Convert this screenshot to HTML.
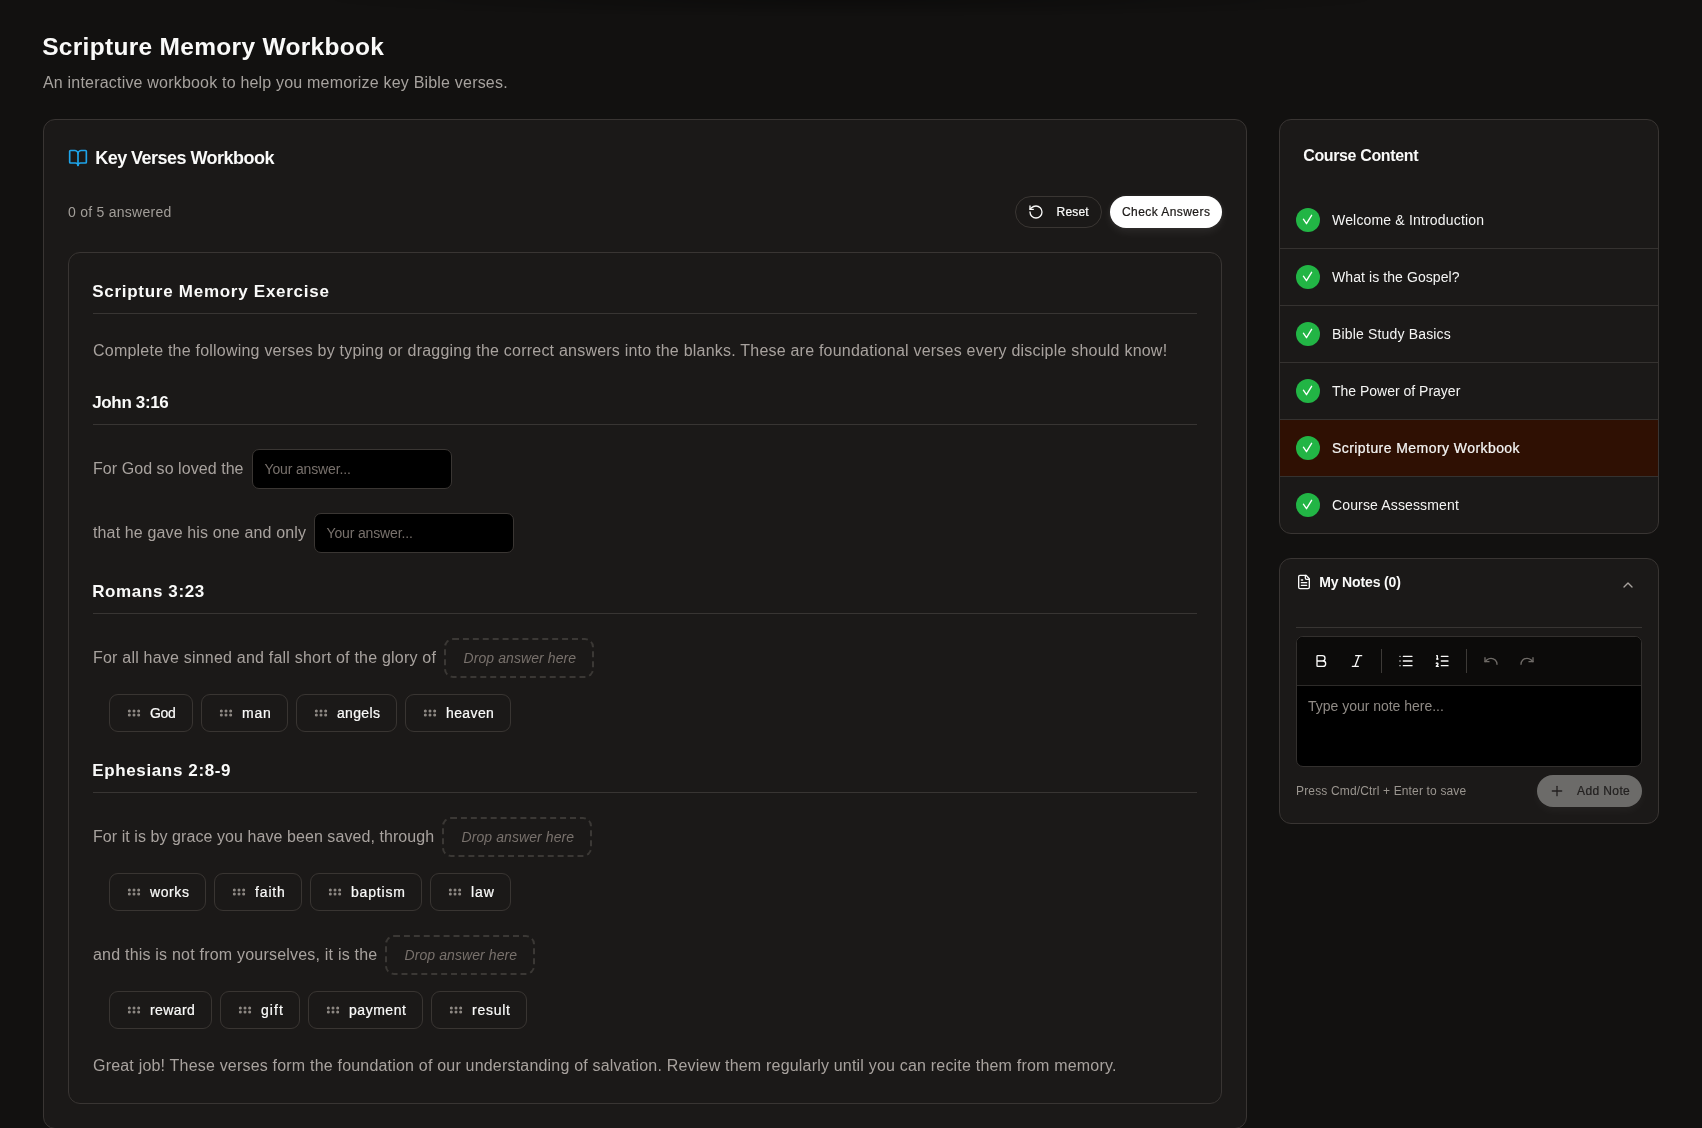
<!DOCTYPE html>
<html lang="en">
<head>
<meta charset="utf-8">
<title>Scripture Memory Workbook</title>
<style>
*{box-sizing:border-box;margin:0;padding:0}
html,body{width:1702px;height:1128px;overflow:hidden}
body{background:#121110;color:#fafaf9;font-family:"Liberation Sans",sans-serif;position:relative}
.abs{position:absolute}
.t{position:absolute;white-space:nowrap;line-height:1;display:block}
.card{position:absolute;background:#1b1918;border:1px solid #393533;border-radius:12px}
.hr{position:absolute;height:1px;background:#383533}
#root{position:absolute;left:0;top:0;width:1702px;height:1128px;will-change:transform}
#topshade{position:absolute;left:0;top:0;width:1702px;height:20px;background:radial-gradient(ellipse 520px 16px at 851px 0,rgba(0,0,0,.28),rgba(0,0,0,0) 100%)}
.btn{position:absolute;height:32px;border-radius:16px;display:flex;align-items:center}
.inp{position:absolute;height:40px;width:200px;background:#000;border:1px solid #3a3633;border-radius:7px}
.drop{position:absolute;width:150px;height:40px;border:2px dashed #3b3835;border-radius:9px}
.chip{position:absolute;height:38px;border:1px solid #393532;border-radius:9px}
.tb{position:absolute;top:653px;width:16px;height:16px}
</style>
</head>
<body>
<div id="root">
<div id="topshade"></div>
<h1 class="t" style="left:42.2px;font-size:24.5px;font-weight:700;color:#fafaf9;top:35.20px;letter-spacing:0.302px">Scripture Memory Workbook</h1>
<p class="t" style="left:43px;font-size:16px;font-weight:400;color:#a6a29e;top:74.80px;letter-spacing:0.196px">An interactive workbook to help you memorize key Bible verses.</p>
<!-- MAIN CARD -->
<div class="card" style="left:43px;top:119px;width:1204px;height:1010px"></div>
<svg class="abs" style="left:68px;top:148px" width="20" height="20" viewBox="0 0 24 24" fill="none" stroke="#1ea4e9" stroke-width="2" stroke-linecap="round" stroke-linejoin="round"><path d="M12 7v14"/><path d="M3 18a1 1 0 0 1-1-1V4a1 1 0 0 1 1-1h5a4 4 0 0 1 4 4 4 4 0 0 1 4-4h5a1 1 0 0 1 1 1v13a1 1 0 0 1-1 1h-6a3 3 0 0 0-3 3 3 3 0 0 0-3-3z"/></svg>
<h2 class="t" style="left:95.2px;font-size:18px;font-weight:700;color:#fafaf9;top:149.00px;letter-spacing:-0.526px">Key Verses Workbook</h2>
<div class="t" style="left:68px;font-size:14px;font-weight:400;color:#a29e99;top:204.80px;letter-spacing:0.262px">0 of 5 answered</div>
<div class="btn" style="left:1015px;top:196px;width:87px;border:1px solid #3a3633"></div>
<svg class="abs" style="left:1028px;top:204px" width="16" height="16" viewBox="0 0 24 24" fill="none" stroke="#fafaf9" stroke-width="2" stroke-linecap="round" stroke-linejoin="round"><path d="M3 12a9 9 0 1 0 9-9 9.750 9.750 0 0 0-6.740 2.740L3 8"/><path d="M3 3v5h5"/></svg>
<span class="t" style="left:1056.5px;font-size:12px;font-weight:400;color:#fafaf9;-webkit-text-stroke:.22px;top:206.20px;letter-spacing:0.210px">Reset</span>
<div class="btn" style="left:1110px;top:196px;width:112px;background:#fff;box-shadow:0 4px 10px rgba(255,255,255,.07),0 0 5px rgba(255,255,255,.07)"></div>
<span class="t" style="left:1122px;font-size:12px;font-weight:400;color:#1c1917;-webkit-text-stroke:.22px;top:206.20px;letter-spacing:0.433px">Check Answers</span>
<!-- INNER CARD -->
<div class="card" style="left:68px;top:252px;width:1154px;height:852px"></div>
<h2 class="t" style="left:92.2px;font-size:17px;font-weight:700;color:#fafaf9;top:283.10px;letter-spacing:0.728px">Scripture Memory Exercise</h2>
<div class="hr" style="left:93px;top:313px;width:1104px"></div>
<p class="t" style="left:93px;font-size:16px;font-weight:400;color:#a8a29e;top:343.00px;letter-spacing:0.221px">Complete the following verses by typing or dragging the correct answers into the blanks. These are foundational verses every disciple should know!</p>
<h3 class="t" style="left:92.2px;font-size:17px;font-weight:700;color:#fafaf9;top:393.60px;letter-spacing:-0.345px">John 3:16</h3>
<div class="hr" style="left:93px;top:424px;width:1104px"></div>
<p class="t" style="left:93px;font-size:16px;font-weight:400;color:#a8a29e;top:461.00px;letter-spacing:0.057px">For God so loved the</p>
<div class="inp" style="left:252px;top:449px"></div>
<span class="t" style="left:264.5px;font-size:14px;font-weight:400;color:#78716c;top:462.00px;letter-spacing:-0.148px">Your answer...</span>
<p class="t" style="left:93px;font-size:16px;font-weight:400;color:#a8a29e;top:524.90px;letter-spacing:0.138px">that he gave his one and only</p>
<div class="inp" style="left:314px;top:513px"></div>
<span class="t" style="left:326.5px;font-size:14px;font-weight:400;color:#78716c;top:525.90px;letter-spacing:-0.148px">Your answer...</span>
<h3 class="t" style="left:92.2px;font-size:17px;font-weight:700;color:#fafaf9;top:582.80px;letter-spacing:0.627px">Romans 3:23</h3>
<div class="hr" style="left:93px;top:613px;width:1104px"></div>
<p class="t" style="left:93px;font-size:16px;font-weight:400;color:#a8a29e;top:650.00px;letter-spacing:0.209px">For all have sinned and fall short of the glory of</p>
<div class="drop" style="left:444px;top:638px"></div>
<span class="t" style="left:463.5px;font-size:14px;font-weight:400;color:#78716c;font-style:italic;top:650.90px;letter-spacing:0.088px">Drop answer here</span>
<div class="chip" style="left:109px;top:694px;width:84px"></div>
<svg class="abs" style="left:126px;top:705px" width="16" height="16" viewBox="0 0 24 24" fill="#8f8a85" stroke="#8f8a85" stroke-width="2" stroke-linecap="round" stroke-linejoin="round"><circle cx="5" cy="9" r="1.25"/><circle cx="12" cy="9" r="1.25"/><circle cx="19" cy="9" r="1.25"/><circle cx="5" cy="15" r="1.25"/><circle cx="12" cy="15" r="1.25"/><circle cx="19" cy="15" r="1.25"/></svg>
<span class="t" style="left:150px;font-size:14px;font-weight:400;color:#fafaf9;-webkit-text-stroke:.22px;top:705.90px;letter-spacing:-0.284px">God</span>
<div class="chip" style="left:201px;top:694px;width:87px"></div>
<svg class="abs" style="left:218px;top:705px" width="16" height="16" viewBox="0 0 24 24" fill="#8f8a85" stroke="#8f8a85" stroke-width="2" stroke-linecap="round" stroke-linejoin="round"><circle cx="5" cy="9" r="1.25"/><circle cx="12" cy="9" r="1.25"/><circle cx="19" cy="9" r="1.25"/><circle cx="5" cy="15" r="1.25"/><circle cx="12" cy="15" r="1.25"/><circle cx="19" cy="15" r="1.25"/></svg>
<span class="t" style="left:242px;font-size:14px;font-weight:400;color:#fafaf9;-webkit-text-stroke:.22px;top:705.90px;letter-spacing:0.833px">man</span>
<div class="chip" style="left:296px;top:694px;width:101px"></div>
<svg class="abs" style="left:313px;top:705px" width="16" height="16" viewBox="0 0 24 24" fill="#8f8a85" stroke="#8f8a85" stroke-width="2" stroke-linecap="round" stroke-linejoin="round"><circle cx="5" cy="9" r="1.25"/><circle cx="12" cy="9" r="1.25"/><circle cx="19" cy="9" r="1.25"/><circle cx="5" cy="15" r="1.25"/><circle cx="12" cy="15" r="1.25"/><circle cx="19" cy="15" r="1.25"/></svg>
<span class="t" style="left:337px;font-size:14px;font-weight:400;color:#fafaf9;-webkit-text-stroke:.22px;top:705.90px;letter-spacing:0.327px">angels</span>
<div class="chip" style="left:405px;top:694px;width:106px"></div>
<svg class="abs" style="left:422px;top:705px" width="16" height="16" viewBox="0 0 24 24" fill="#8f8a85" stroke="#8f8a85" stroke-width="2" stroke-linecap="round" stroke-linejoin="round"><circle cx="5" cy="9" r="1.25"/><circle cx="12" cy="9" r="1.25"/><circle cx="19" cy="9" r="1.25"/><circle cx="5" cy="15" r="1.25"/><circle cx="12" cy="15" r="1.25"/><circle cx="19" cy="15" r="1.25"/></svg>
<span class="t" style="left:446px;font-size:14px;font-weight:400;color:#fafaf9;-webkit-text-stroke:.22px;top:705.90px;letter-spacing:0.393px">heaven</span>
<h3 class="t" style="left:92.2px;font-size:17px;font-weight:700;color:#fafaf9;top:761.60px;letter-spacing:0.639px">Ephesians 2:8-9</h3>
<div class="hr" style="left:93px;top:792px;width:1104px"></div>
<p class="t" style="left:93px;font-size:16px;font-weight:400;color:#a8a29e;top:829.30px;letter-spacing:0.068px">For it is by grace you have been saved, through</p>
<div class="drop" style="left:442px;top:817px"></div>
<span class="t" style="left:461.5px;font-size:14px;font-weight:400;color:#78716c;font-style:italic;top:830.00px;letter-spacing:0.088px">Drop answer here</span>
<div class="chip" style="left:109px;top:873px;width:97px"></div>
<svg class="abs" style="left:126px;top:884px" width="16" height="16" viewBox="0 0 24 24" fill="#8f8a85" stroke="#8f8a85" stroke-width="2" stroke-linecap="round" stroke-linejoin="round"><circle cx="5" cy="9" r="1.25"/><circle cx="12" cy="9" r="1.25"/><circle cx="19" cy="9" r="1.25"/><circle cx="5" cy="15" r="1.25"/><circle cx="12" cy="15" r="1.25"/><circle cx="19" cy="15" r="1.25"/></svg>
<span class="t" style="left:150px;font-size:14px;font-weight:400;color:#fafaf9;-webkit-text-stroke:.22px;top:884.90px;letter-spacing:0.584px">works</span>
<div class="chip" style="left:214px;top:873px;width:88px"></div>
<svg class="abs" style="left:231px;top:884px" width="16" height="16" viewBox="0 0 24 24" fill="#8f8a85" stroke="#8f8a85" stroke-width="2" stroke-linecap="round" stroke-linejoin="round"><circle cx="5" cy="9" r="1.25"/><circle cx="12" cy="9" r="1.25"/><circle cx="19" cy="9" r="1.25"/><circle cx="5" cy="15" r="1.25"/><circle cx="12" cy="15" r="1.25"/><circle cx="19" cy="15" r="1.25"/></svg>
<span class="t" style="left:255px;font-size:14px;font-weight:400;color:#fafaf9;-webkit-text-stroke:.22px;top:884.90px;letter-spacing:0.858px">faith</span>
<div class="chip" style="left:310px;top:873px;width:112px"></div>
<svg class="abs" style="left:327px;top:884px" width="16" height="16" viewBox="0 0 24 24" fill="#8f8a85" stroke="#8f8a85" stroke-width="2" stroke-linecap="round" stroke-linejoin="round"><circle cx="5" cy="9" r="1.25"/><circle cx="12" cy="9" r="1.25"/><circle cx="19" cy="9" r="1.25"/><circle cx="5" cy="15" r="1.25"/><circle cx="12" cy="15" r="1.25"/><circle cx="19" cy="15" r="1.25"/></svg>
<span class="t" style="left:351px;font-size:14px;font-weight:400;color:#fafaf9;-webkit-text-stroke:.22px;top:884.90px;letter-spacing:0.811px">baptism</span>
<div class="chip" style="left:430px;top:873px;width:81px"></div>
<svg class="abs" style="left:447px;top:884px" width="16" height="16" viewBox="0 0 24 24" fill="#8f8a85" stroke="#8f8a85" stroke-width="2" stroke-linecap="round" stroke-linejoin="round"><circle cx="5" cy="9" r="1.25"/><circle cx="12" cy="9" r="1.25"/><circle cx="19" cy="9" r="1.25"/><circle cx="5" cy="15" r="1.25"/><circle cx="12" cy="15" r="1.25"/><circle cx="19" cy="15" r="1.25"/></svg>
<span class="t" style="left:471px;font-size:14px;font-weight:400;color:#fafaf9;-webkit-text-stroke:.22px;top:884.90px;letter-spacing:0.942px">law</span>
<p class="t" style="left:93px;font-size:16px;font-weight:400;color:#a8a29e;top:947.00px;letter-spacing:0.208px">and this is not from yourselves, it is the</p>
<div class="drop" style="left:385px;top:935px"></div>
<span class="t" style="left:404.5px;font-size:14px;font-weight:400;color:#78716c;font-style:italic;top:947.90px;letter-spacing:0.088px">Drop answer here</span>
<div class="chip" style="left:109px;top:991px;width:103px"></div>
<svg class="abs" style="left:126px;top:1002px" width="16" height="16" viewBox="0 0 24 24" fill="#8f8a85" stroke="#8f8a85" stroke-width="2" stroke-linecap="round" stroke-linejoin="round"><circle cx="5" cy="9" r="1.25"/><circle cx="12" cy="9" r="1.25"/><circle cx="19" cy="9" r="1.25"/><circle cx="5" cy="15" r="1.25"/><circle cx="12" cy="15" r="1.25"/><circle cx="19" cy="15" r="1.25"/></svg>
<span class="t" style="left:150px;font-size:14px;font-weight:400;color:#fafaf9;-webkit-text-stroke:.22px;top:1002.90px;letter-spacing:0.421px">reward</span>
<div class="chip" style="left:220px;top:991px;width:80px"></div>
<svg class="abs" style="left:237px;top:1002px" width="16" height="16" viewBox="0 0 24 24" fill="#8f8a85" stroke="#8f8a85" stroke-width="2" stroke-linecap="round" stroke-linejoin="round"><circle cx="5" cy="9" r="1.25"/><circle cx="12" cy="9" r="1.25"/><circle cx="19" cy="9" r="1.25"/><circle cx="5" cy="15" r="1.25"/><circle cx="12" cy="15" r="1.25"/><circle cx="19" cy="15" r="1.25"/></svg>
<span class="t" style="left:261px;font-size:14px;font-weight:400;color:#fafaf9;-webkit-text-stroke:.22px;top:1002.90px;letter-spacing:1.071px">gift</span>
<div class="chip" style="left:308px;top:991px;width:115px"></div>
<svg class="abs" style="left:325px;top:1002px" width="16" height="16" viewBox="0 0 24 24" fill="#8f8a85" stroke="#8f8a85" stroke-width="2" stroke-linecap="round" stroke-linejoin="round"><circle cx="5" cy="9" r="1.25"/><circle cx="12" cy="9" r="1.25"/><circle cx="19" cy="9" r="1.25"/><circle cx="5" cy="15" r="1.25"/><circle cx="12" cy="15" r="1.25"/><circle cx="19" cy="15" r="1.25"/></svg>
<span class="t" style="left:349px;font-size:14px;font-weight:400;color:#fafaf9;-webkit-text-stroke:.22px;top:1002.90px;letter-spacing:0.533px">payment</span>
<div class="chip" style="left:431px;top:991px;width:96px"></div>
<svg class="abs" style="left:448px;top:1002px" width="16" height="16" viewBox="0 0 24 24" fill="#8f8a85" stroke="#8f8a85" stroke-width="2" stroke-linecap="round" stroke-linejoin="round"><circle cx="5" cy="9" r="1.25"/><circle cx="12" cy="9" r="1.25"/><circle cx="19" cy="9" r="1.25"/><circle cx="5" cy="15" r="1.25"/><circle cx="12" cy="15" r="1.25"/><circle cx="19" cy="15" r="1.25"/></svg>
<span class="t" style="left:472px;font-size:14px;font-weight:400;color:#fafaf9;-webkit-text-stroke:.22px;top:1002.90px;letter-spacing:0.733px">result</span>
<p class="t" style="left:93px;font-size:16px;font-weight:400;color:#a8a29e;top:1058.30px;letter-spacing:0.196px">Great job! These verses form the foundation of our understanding of salvation. Review them regularly until you can recite them from memory.</p>
<!-- SIDEBAR -->
<div class="card" style="left:1279px;top:119px;width:380px;height:415px"></div>
<h3 class="t" style="left:1303.2px;font-size:16px;font-weight:700;color:#fafaf9;top:148.20px;letter-spacing:-0.362px">Course Content</h3>
<svg class="abs" style="left:1296px;top:208px" width="24" height="24" viewBox="0 0 24 24"><circle cx="12" cy="12" r="12" fill="#22b545"/><polyline points="7.4,11.2 10.5,15.7 15.6,7.3" fill="none" stroke="#fff" stroke-width="1.35" stroke-linecap="round" stroke-linejoin="round"/></svg>
<div class="t" style="left:1332px;font-size:14px;font-weight:400;color:#f5f5f4;top:213.00px;letter-spacing:0.173px">Welcome &amp; Introduction</div>
<div class="abs" style="left:1280px;top:248px;width:378px;height:1px;background:#353230"></div>
<svg class="abs" style="left:1296px;top:265px" width="24" height="24" viewBox="0 0 24 24"><circle cx="12" cy="12" r="12" fill="#22b545"/><polyline points="7.4,11.2 10.5,15.7 15.6,7.3" fill="none" stroke="#fff" stroke-width="1.35" stroke-linecap="round" stroke-linejoin="round"/></svg>
<div class="t" style="left:1332px;font-size:14px;font-weight:400;color:#f5f5f4;top:270.00px;letter-spacing:0.085px">What is the Gospel?</div>
<div class="abs" style="left:1280px;top:305px;width:378px;height:1px;background:#353230"></div>
<svg class="abs" style="left:1296px;top:322px" width="24" height="24" viewBox="0 0 24 24"><circle cx="12" cy="12" r="12" fill="#22b545"/><polyline points="7.4,11.2 10.5,15.7 15.6,7.3" fill="none" stroke="#fff" stroke-width="1.35" stroke-linecap="round" stroke-linejoin="round"/></svg>
<div class="t" style="left:1332px;font-size:14px;font-weight:400;color:#f5f5f4;top:327.00px;letter-spacing:0.167px">Bible Study Basics</div>
<div class="abs" style="left:1280px;top:362px;width:378px;height:1px;background:#353230"></div>
<svg class="abs" style="left:1296px;top:379px" width="24" height="24" viewBox="0 0 24 24"><circle cx="12" cy="12" r="12" fill="#22b545"/><polyline points="7.4,11.2 10.5,15.7 15.6,7.3" fill="none" stroke="#fff" stroke-width="1.35" stroke-linecap="round" stroke-linejoin="round"/></svg>
<div class="t" style="left:1332px;font-size:14px;font-weight:400;color:#f5f5f4;top:384.00px;letter-spacing:-0.005px">The Power of Prayer</div>
<div class="abs" style="left:1280px;top:420px;width:378px;height:56px;background:#2f1003"></div>
<div class="abs" style="left:1280px;top:419px;width:378px;height:1px;background:#353230"></div>
<svg class="abs" style="left:1296px;top:436px" width="24" height="24" viewBox="0 0 24 24"><circle cx="12" cy="12" r="12" fill="#22b545"/><polyline points="7.4,11.2 10.5,15.7 15.6,7.3" fill="none" stroke="#fff" stroke-width="1.35" stroke-linecap="round" stroke-linejoin="round"/></svg>
<div class="t" style="left:1332px;font-size:14px;font-weight:400;color:#f5f5f4;-webkit-text-stroke:.22px;top:441.00px;letter-spacing:0.436px">Scripture Memory Workbook</div>
<div class="abs" style="left:1280px;top:476px;width:378px;height:1px;background:#353230"></div>
<svg class="abs" style="left:1296px;top:493px" width="24" height="24" viewBox="0 0 24 24"><circle cx="12" cy="12" r="12" fill="#22b545"/><polyline points="7.4,11.2 10.5,15.7 15.6,7.3" fill="none" stroke="#fff" stroke-width="1.35" stroke-linecap="round" stroke-linejoin="round"/></svg>
<div class="t" style="left:1332px;font-size:14px;font-weight:400;color:#f5f5f4;top:498.00px;letter-spacing:0.144px">Course Assessment</div>
<!-- NOTES -->
<div class="card" style="left:1279px;top:558px;width:380px;height:266px"></div>
<svg class="abs" style="left:1296px;top:574px" width="16" height="16" viewBox="0 0 24 24" fill="none" stroke="#fafaf9" stroke-width="2" stroke-linecap="round" stroke-linejoin="round"><path d="M15 2H6a2 2 0 0 0-2 2v16a2 2 0 0 0 2 2h12a2 2 0 0 0 2-2V7Z"/><path d="M14 2v4a2 2 0 0 0 2 2h4"/><path d="M10 9H8"/><path d="M16 13H8"/><path d="M16 17H8"/></svg>
<svg class="abs" style="left:1620px;top:577px" width="16" height="16" viewBox="0 0 24 24" fill="none" stroke="#a8a29e" stroke-width="2" stroke-linecap="round" stroke-linejoin="round"><path d="m18 15-6-6-6 6"/></svg>
<div class="hr" style="left:1296px;top:627px;width:346px"></div>
<div class="abs" style="left:1296px;top:636px;width:346px;height:131px;border:1px solid #33302e;border-radius:7px;background:#000;overflow:hidden">
<div style="height:49px;background:#0c0b0a;border-bottom:1px solid #2d2b29"></div>
</div>
<svg class="tb" style="left:1313px" viewBox="0 0 24 24" fill="none" stroke="#fafaf9" stroke-width="2" stroke-linecap="round" stroke-linejoin="round"><path d="M6 12h9a4 4 0 0 1 0 8H7a1 1 0 0 1-1-1V5a1 1 0 0 1 1-1h7a4 4 0 0 1 0 8"/></svg>
<svg class="tb" style="left:1349px" viewBox="0 0 24 24" fill="none" stroke="#fafaf9" stroke-width="2" stroke-linecap="round" stroke-linejoin="round"><line x1="19" x2="10" y1="4" y2="4"/><line x1="14" x2="5" y1="20" y2="20"/><line x1="15" x2="9" y1="4" y2="20"/></svg>
<div class="abs" style="left:1381px;top:649px;width:1px;height:24px;background:#3d3a37"></div>
<svg class="tb" style="left:1398px" viewBox="0 0 24 24" fill="none" stroke="#fafaf9" stroke-width="2" stroke-linecap="round" stroke-linejoin="round"><path d="M3 5h.01"/><path d="M3 12h.01"/><path d="M3 19h.01"/><path d="M8 5h13"/><path d="M8 12h13"/><path d="M8 19h13"/></svg>
<svg class="tb" style="left:1434px" viewBox="0 0 24 24" fill="none" stroke="#fafaf9" stroke-width="2" stroke-linecap="round" stroke-linejoin="round"><path d="M11 5h10"/><path d="M11 12h10"/><path d="M11 19h10"/><path d="M4 4h1v5"/><path d="M4 9h2"/><path d="M6.500 20H3.400c0-1 2.600-1.925 2.600-3.500a1.500 1.500 0 0 0-2.600-1.020"/></svg>
<div class="abs" style="left:1466px;top:649px;width:1px;height:24px;background:#3d3a37"></div>
<svg class="tb" style="left:1483px" viewBox="0 0 24 24" fill="none" stroke="#6f6b67" stroke-width="2" stroke-linecap="round" stroke-linejoin="round"><path d="M3 7v6h6"/><path d="M21 17a9 9 0 0 0-9-9 9 9 0 0 0-6 2.300L3 13"/></svg>
<svg class="tb" style="left:1519px" viewBox="0 0 24 24" fill="none" stroke="#6f6b67" stroke-width="2" stroke-linecap="round" stroke-linejoin="round"><path d="M21 7v6h-6"/><path d="M3 17a9 9 0 0 1 9-9 9 9 0 0 1 6 2.300l3 2.700"/></svg>
<div class="btn" style="left:1537px;top:775px;width:105px;background:#6c6b69;color:#232120;padding-left:12px;box-shadow:0 4px 10px rgba(255,255,255,.04)">
<svg width="16" height="16" viewBox="0 0 24 24" fill="none" stroke="#232120" stroke-width="2" stroke-linecap="round" stroke-linejoin="round" style="margin-right:12px"><path d="M5 12h14"/><path d="M12 5v14"/></svg></div>

<h3 class="t" style="left:1319.2px;font-size:14px;font-weight:700;color:#fafaf9;top:574.80px;letter-spacing:-0.139px">My Notes (0)</h3>
<div class="t" style="left:1308px;font-size:14px;font-weight:400;color:#8f8a85;top:698.90px;letter-spacing:-0.019px">Type your note here...</div>
<div class="t" style="left:1296px;font-size:12px;font-weight:400;color:#9a958f;top:784.60px;letter-spacing:0.154px">Press Cmd/Ctrl + Enter to save</div>
<span class="t" style="left:1577px;font-size:12px;font-weight:400;color:#232120;-webkit-text-stroke:.22px;top:784.80px;letter-spacing:0.393px">Add Note</span>
</div>
</body>
</html>
